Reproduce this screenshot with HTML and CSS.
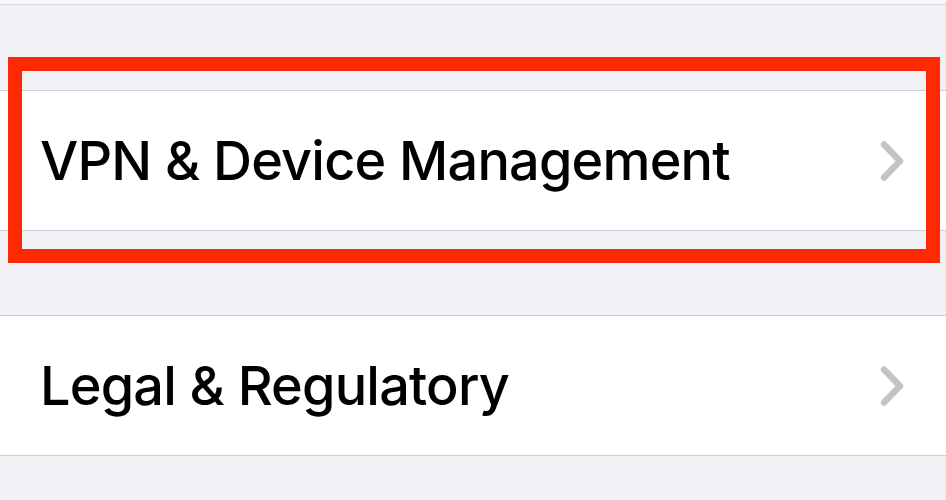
FILE: index.html
```html
<!DOCTYPE html>
<html>
<head>
<meta charset="utf-8">
<link rel="stylesheet" href="styles.css">
</head>
<body>
<div class="page">
  <div class="top-strip"></div>
  <div class="gap gap-top"></div>
  <div class="group">
    <div class="row">
      <span class="label">VPN &amp; Device Management</span>
      <svg class="chev" width="26" height="42" viewBox="0 0 26 42"><path d="M5 4.5 L21 21 L5 37.5" fill="none" stroke="#c4c4c7" stroke-width="6.5" stroke-linecap="round" stroke-linejoin="round"/></svg>
    </div>
  </div>
  <div class="gap gap-mid"></div>
  <div class="group">
    <div class="row">
      <span class="label">Legal &amp; Regulatory</span>
      <svg class="chev" width="26" height="42" viewBox="0 0 26 42"><path d="M5 4.5 L21 21 L5 37.5" fill="none" stroke="#c4c4c7" stroke-width="6.5" stroke-linecap="round" stroke-linejoin="round"/></svg>
    </div>
  </div>
  <div class="highlight"></div>
</div>
</body>
</html>
```
FILE: styles.css
```css
html, body {
  margin: 0;
  padding: 0;
}
body {
  background: #f0f0f5;
  font-family: Inter, "Liberation Sans", sans-serif;
  width: 946px;
  height: 500px;
  overflow: hidden;
}
.page {
  position: relative;
  height: 500px;
}
.top-strip {
  height: 4px;
  background: #f7f7fa;
  border-bottom: 1px solid #d6d6da;
}
.gap-top {
  height: 85px;
}
.gap-mid {
  height: 84px;
}
.group {
  background: #ffffff;
  border-top: 1px solid #cfcfd4;
  border-bottom: 1px solid #cfcfd4;
}
.row {
  height: 139px;
  display: flex;
  align-items: center;
  justify-content: space-between;
  padding: 0 41px 0 40px;
}
.label {
  font-size: 54px;
  font-weight: 500;
  color: #000;
  letter-spacing: -0.8px;
}
.chev {
  display: block;
}
.highlight {
  position: absolute;
  left: 8px;
  top: 57px;
  width: 932px;
  height: 206px;
  box-sizing: border-box;
  border: 14px solid #fe2a05;
}
```
